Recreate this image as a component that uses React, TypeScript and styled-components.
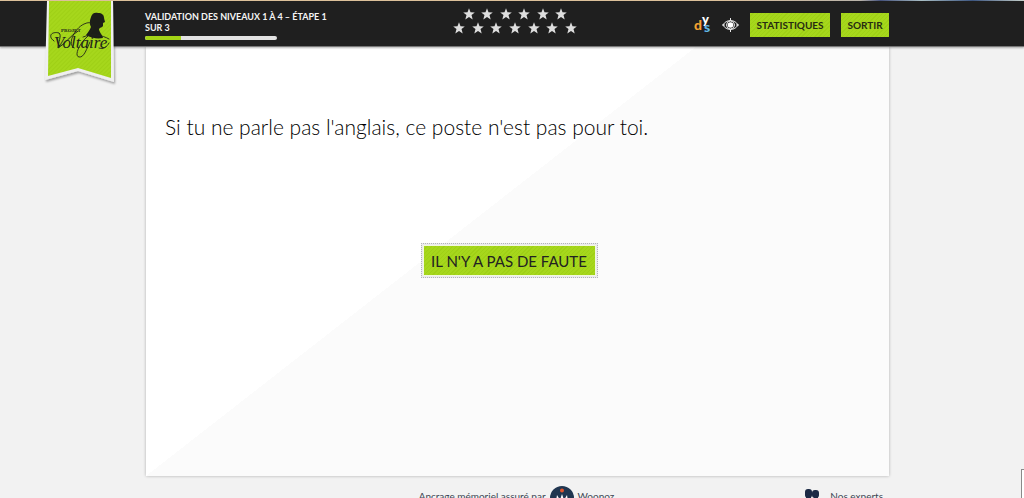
import React from 'react';
import styled, { createGlobalStyle, css } from 'styled-components';

const GlobalStyle = createGlobalStyle`
  * { box-sizing: border-box; }
  body { margin: 0; background: #f2f2f2; font-family: Lato, "Liberation Sans", sans-serif; color: #222; }
  button { font-family: inherit; cursor: pointer; }
`;

const hatch = css`
  background: repeating-linear-gradient(135deg, #a6d71c 0 2px, #9fd016 2px 3px);
`;

const Page = styled.div`
  position: relative;
  display: flex;
  flex-direction: column;
  height: 100vh;
  overflow: hidden;
`;

const Header = styled.header`
  position: relative;
  z-index: 1;
  display: grid;
  grid-template-columns: 145px minmax(0, 1fr) 135px;
  flex: none;
  height: 47px;
  background: #1f1f1f;
  border-bottom: 1px solid #777;
  box-shadow: 0 1px 2px rgba(0, 0, 0, 0.3);
  &::before {
    content: '';
    grid-column: 1 / -1;
    height: 1px;
    background: linear-gradient(90deg, #dcc09a 0 70%, #b9b3aa 84%, #45527c 86%, #a8bdc4 90%, #3d5680 95%, #c5cfca 100%);
  }
`;

const LogoLink = styled.a`
  position: absolute;
  top: 1px;
  left: 40px;
  display: block;
  svg { display: block; }
`;

const Bar = styled.div`
  grid-column: 2;
  display: grid;
  grid-template-columns: minmax(0, 1fr) auto minmax(0, 1fr);
  height: 45px;
`;

const Progress = styled.div`
  padding-top: 10px;
`;

const ProgressTitle = styled.h1`
  margin: 0 0 3px;
  max-width: 188px;
  font-size: 9px;
  line-height: 11px;
  font-weight: 700;
  text-transform: uppercase;
  color: #f4f4f4;
`;

const Track = styled.div`
  width: 132px;
  height: 4px;
  border-radius: 2px;
  background: #e2e2e2;
  overflow: hidden;
`;

const Fill = styled.div`
  height: 100%;
  background: #a3d416;
`;

const Stars = styled.div`
  display: flex;
  flex-direction: column;
  align-items: center;
  gap: 2px;
  padding: 7px 4px 0 0;
`;

const StarRow = styled.div<{ $width: number }>`
  display: flex;
  justify-content: space-between;
  width: ${p => p.$width}px;
  svg { display: block; }
`;

const Tools = styled.div`
  display: flex;
  justify-content: flex-end;
  align-items: flex-start;
  gap: 11px;
  padding-top: 12px;
`;

const IconButton = styled.button`
  display: flex;
  align-items: center;
  height: 24px;
  padding: 0;
  border: 0;
  background: none;
  svg { display: block; overflow: visible; }
`;

const HeaderButton = styled.button<{ $width: number }>`
  ${hatch}
  width: ${p => p.$width}px;
  height: 24px;
  padding: 0;
  border: 0;
  font-size: 10px;
  line-height: 24px;
  font-weight: 700;
  text-transform: uppercase;
  white-space: nowrap;
  color: #262b12;
`;

const Main = styled.main`
  display: flex;
  flex-direction: column;
  flex: none;
  height: calc(100vh - 69px);
  margin: 0 135px 0 146px;
  padding: 67px 36px 0 19px;
  background: linear-gradient(to bottom right, #fff 50%, #fbfbfb 50%) 0 0 / 74% 100% no-repeat #fbfbfb;
  box-shadow: 0 0 3px rgba(0, 0, 0, 0.28);
`;

const Sentence = styled.p`
  margin: 0 0 105px;
  font-size: 21px;
  line-height: 26px;
  font-weight: 300;
  color: #000;
`;

const AnswerButton = styled.button`
  ${hatch}
  align-self: center;
  width: 173px;
  height: 31px;
  padding: 0;
  border: 1px solid #f2f8df;
  box-shadow: 0 0 0 2px #ebebee;
  outline: 1px dotted #b4b4b8;
  outline-offset: 1px;
  font-size: 15px;
  line-height: 28px;
  text-transform: uppercase;
  white-space: nowrap;
  color: #222;
`;

const Footer = styled.footer`
  display: grid;
  grid-template-columns: 1fr auto 1fr;
  flex: none;
  margin: 0 141px 0 150px;
  padding-top: 10px;
  font-size: 10px;
  line-height: 20px;
  color: #3d4654;
`;

const FooterItem = styled.a`
  display: flex;
  align-items: flex-start;
  gap: 4px;
  color: inherit;
  text-decoration: none;
  white-space: nowrap;
  svg { display: block; }
`;

const Sponsor = styled(FooterItem)`
  grid-column: 2;
`;

const Experts = styled(FooterItem)`
  justify-self: end;
  gap: 10px;
`;

const SideTab = styled.div`
  position: absolute;
  right: 0;
  bottom: 0;
  width: 3px;
  height: 29px;
  border: solid #8a8a8a;
  border-width: 1px 0 0 1px;
  background: #fff;
`;

const Logo = () => (
  <svg width="80" height="92" viewBox="0 0 80 92" role="img" aria-label="Projet Voltaire">
    <defs>
      <pattern id="hatch" width="3" height="3" patternUnits="userSpaceOnUse" patternTransform="rotate(45)">
        <rect width="3" height="3" fill="#a6d71c" />
        <rect width="1" height="3" fill="#9fd016" />
      </pattern>
      <filter id="soft" x="-20%" y="-20%" width="140%" height="140%">
        <feDropShadow dx="1" dy="2" stdDeviation="1.2" floodOpacity="0.35" />
      </filter>
    </defs>
    <path d="M7 0H73L74 81 38 70 5 79Z" fill="#efefef" filter="url(#soft)" />
    <path d="M9 0H71L71 77 38 67 8 75Z" fill="url(#hatch)" />
    <path d="M51 16C52 12 55 11 58 12 62 12 64 14 64 17L65 21 63 22 63 25C62 27 60 26 59 28 59 31 62 33 63 37 57 38 51 37 46 34 48 31 50 29 51 26 49 22 50 19 51 16Z" fill="#1c1e18" />
    <g fontFamily="'Liberation Serif', serif" fill="#20241a">
      <text x="21" y="31" fontSize="5" fontWeight="700">PROJET</text>
      <text x="14" y="47" fontSize="17" fontStyle="italic">Voltaire</text>
    </g>
    <g fill="none" stroke="#20241a" strokeLinecap="round">
      <path d="M14 40C7 35 12 30 19 32 22 34 18 42 18 47 25 43 30 35 38 30" strokeWidth="1" />
      <path d="M34 47C27 43 34 28 44 23 55 18 56 28 47 36 39 43 34 55 39 56 44 57 47 47 50 41" strokeWidth="0.9" />
      <path d="M43 36C52 32 62 34 69 38M59 47C63 49 67 46 69 42" strokeWidth="0.9" />
    </g>
  </svg>
);

const Star = () => (
  <svg width="12" height="12" viewBox="0 0 12 12" aria-hidden="true">
    <path d="M6 .3 7.5 4.2 11.8 4.4 8.5 7 9.7 11.4 6 9 2.3 11.4 3.5 7 .2 4.4 4.5 4.2Z" fill="#dedede" />
  </svg>
);

const DysIcon = () => (
  <svg width="17" height="24" viewBox="0 0 17 24" aria-hidden="true">
    <g fontFamily="Lato, sans-serif" fontWeight="900">
      <text x="0" y="17" fontSize="14" fill="#f3a332">d</text>
      <text x="8" y="11" fontSize="13" fill="#fff">y</text>
      <text x="10" y="19" fontSize="14" fill="#62b9e8">s</text>
    </g>
  </svg>
);

const EyeIcon = () => (
  <svg width="17" height="14" viewBox="0 0 17 14" aria-hidden="true">
    <g fill="none" stroke="#e8e8e8">
      <path d="M1 7C4 1 13 1 16 7 13 13 4 13 1 7Z" />
      <circle cx="8.5" cy="7" r="4" />
      <path d="M8.5 0V3M8.5 11V14M0 7H3M14 7H17" />
    </g>
    <circle cx="8.5" cy="7" r="2.8" fill="#fff" />
  </svg>
);

const WoonozIcon = () => (
  <svg width="24" height="24" viewBox="0 0 24 24" aria-hidden="true">
    <circle cx="12" cy="12" r="12" fill="#203650" />
    <circle cx="12" cy="4.5" r="2" fill="#e2552b" />
    <path d="M12 8 14 14 17 9 18 15 22 12 18 20H6L2 12 6 15 7 9 10 14Z" fill="#fff" />
  </svg>
);

const ExpertsIcon = () => (
  <svg width="15" height="20" viewBox="0 0 15 20" aria-hidden="true">
    <g fill="#1b2a45">
      <rect x="0" y="3" width="7" height="9" rx="3" />
      <rect x="7" y="4" width="7" height="8" rx="3" />
      <path d="M1 20V11H6V20ZM9 20V11H13V20Z" />
    </g>
  </svg>
);

const starRows = [
  { count: 6, width: 105 },
  { count: 7, width: 124 },
];

export default function App() {
  const progress = 27;
  return (
    <Page>
      <GlobalStyle />
      <Header>
        <Bar>
          <Progress>
            <ProgressTitle id="step">Validation des niveaux 1 à 4 – Étape 1 sur 3</ProgressTitle>
            <Track role="progressbar" aria-labelledby="step" aria-valuenow={progress} aria-valuemin={0} aria-valuemax={100}>
              <Fill style={{ width: `${progress}%` }} />
            </Track>
          </Progress>
          <Stars>
            {starRows.map(row => (
              <StarRow key={row.count} $width={row.width}>
                {Array.from({ length: row.count }, (_, i) => <Star key={i} />)}
              </StarRow>
            ))}
          </Stars>
          <Tools>
            <IconButton aria-label="Mode dys"><DysIcon /></IconButton>
            <IconButton aria-label="Affichage"><EyeIcon /></IconButton>
            <HeaderButton $width={80}>Statistiques</HeaderButton>
            <HeaderButton $width={48}>Sortir</HeaderButton>
          </Tools>
        </Bar>
        <LogoLink href="#"><Logo /></LogoLink>
      </Header>
      <Main>
        <Sentence>Si tu ne parle pas l'anglais, ce poste n'est pas pour toi.</Sentence>
        <AnswerButton>Il n'y a pas de faute</AnswerButton>
      </Main>
      <Footer>
        <Sponsor href="#">Ancrage mémoriel assuré par <WoonozIcon /> Woonoz</Sponsor>
        <Experts href="#"><ExpertsIcon /> Nos experts</Experts>
      </Footer>
      <SideTab />
    </Page>
  );
}
